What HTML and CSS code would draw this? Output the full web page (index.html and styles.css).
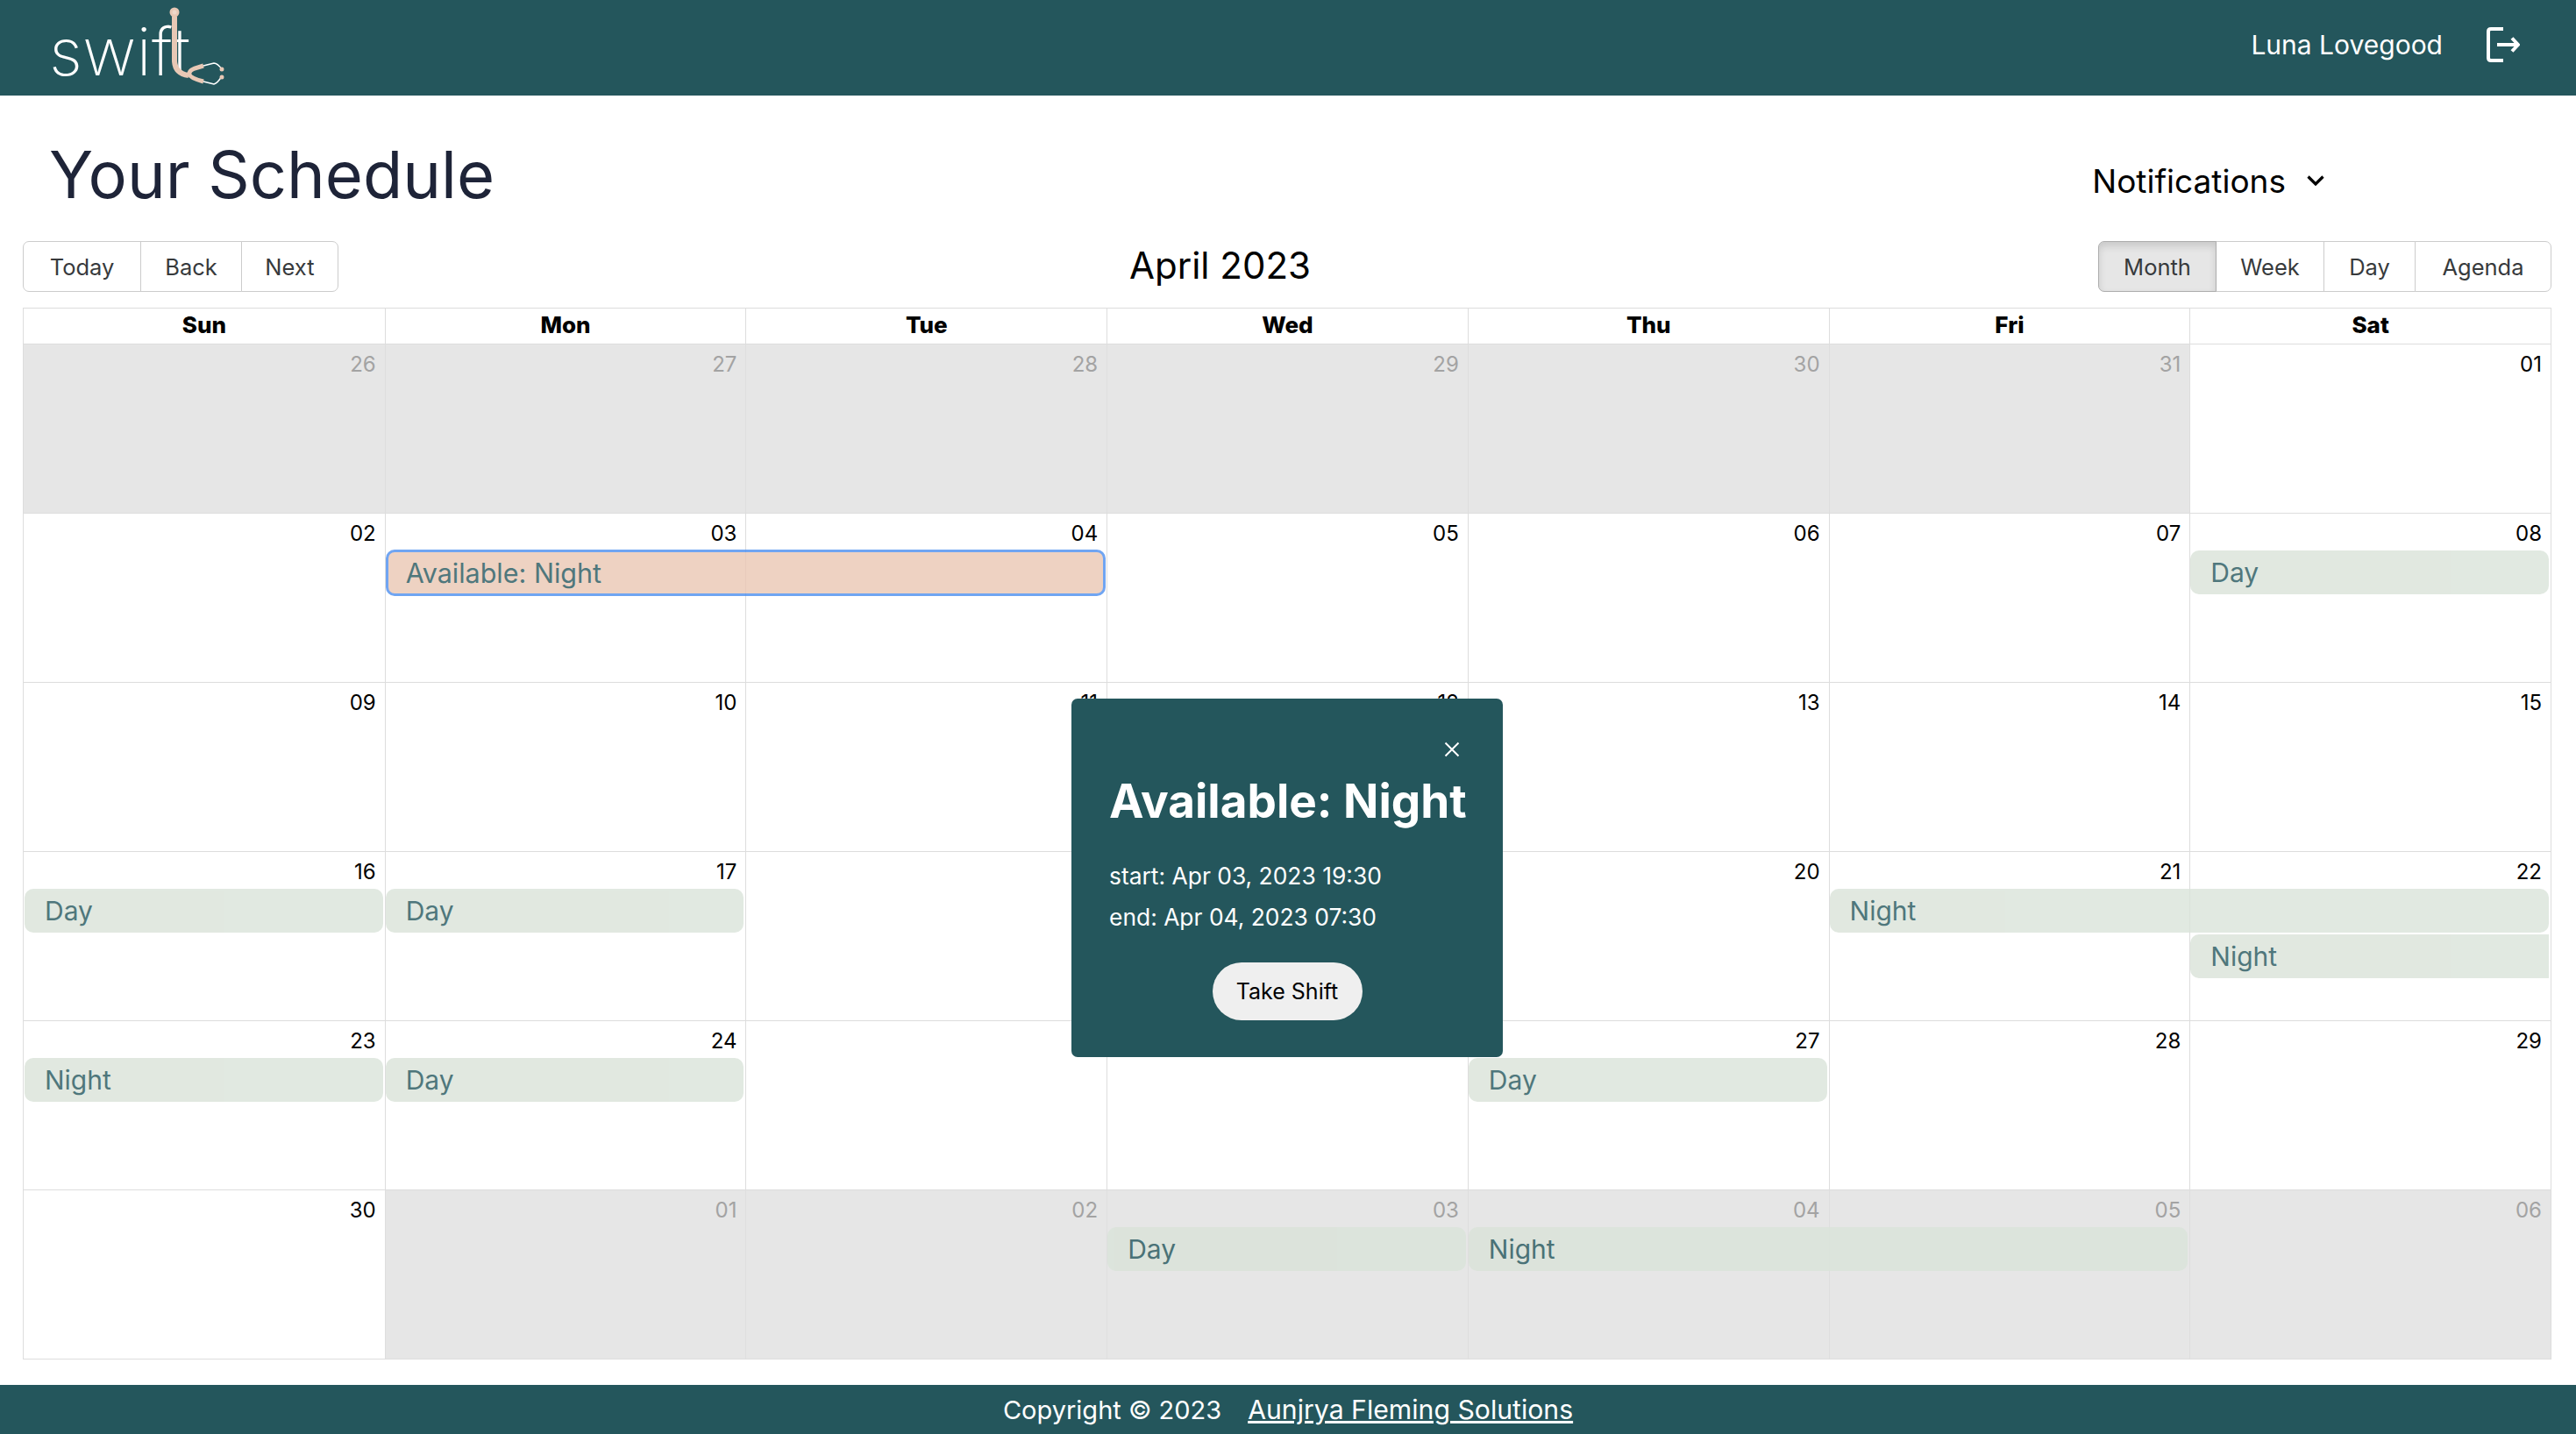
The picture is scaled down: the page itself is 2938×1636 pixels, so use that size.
FILE: index.html
```html
<!DOCTYPE HTML>
<html>
	<head>
		<title>Your Schedule</title>
		<link rel="stylesheet" href="styles.css">
	</head>
	<body>
		<div class="navbar">
			<div class="logo">
				<span class="logoText">swift</span>
				<svg class="logoScope" width="100" height="100" viewBox="0 0 100 100">
					<path d="M9 15V66Q10 80 25 82" fill="none" stroke="#e8c8b5" stroke-width="6"/>
					<circle cx="9" cy="10" r="5.5" fill="#e8c8b5"/>
					<circle cx="9" cy="10" r="2.5" fill="#efd8ca"/>
					<path d="M42 71L32 74Q25 77 26 81Q27 85 42 89" fill="none" stroke="#e8c8b5" stroke-width="5"/>
					<path d="M42 71L54 68Q58 68 63 75M42 89L54 92Q58 91 63 83" fill="none" stroke="#ffffff" stroke-width="1.5"/>
					<circle cx="63" cy="75" r="2.5" fill="#e8c8b5"/>
					<circle cx="63" cy="84" r="2.5" fill="#e8c8b5"/>
				</svg>
			</div>
			<div class="navRight">
				<span class="userName">Luna Lovegood</span>
				<svg class="logoutIcon" width="38" height="40" viewBox="0 0 38 40" fill="none" stroke="#ffffff" stroke-width="4" stroke-linejoin="round">
					<path d="M19 2H5Q2 2 2 5V35Q2 38 5 38H19"/>
					<path d="M12 20H36M29 12.5L36 20L29 27.5"/>
				</svg>
			</div>
		</div>

		<div class="content">
			<div class="titleRow">
				<h1 class="pageTitle">Your Schedule</h1>
				<div class="notifications">
					<span>Notifications</span>
					<svg width="20" height="12" viewBox="0 0 20 12" fill="none" stroke="#000000" stroke-width="3.2"><path d="M1.5 1.5L10 10L18.5 1.5"/></svg>
				</div>
			</div>

			<div class="toolbar">
				<div class="btnGroup">
					<button class="btn btnToday">Today</button>
					<button class="btn btnBack">Back</button>
					<button class="btn btnNext">Next</button>
				</div>
				<div class="monthLabel">April 2023</div>
				<div class="btnGroup">
					<button class="btn btnMonth active">Month</button>
					<button class="btn btnWeek">Week</button>
					<button class="btn btnDay">Day</button>
					<button class="btn btnAgenda">Agenda</button>
				</div>
			</div>

			<div class="calendar">
				<div class="weekHeader">
					<div>Sun</div><div>Mon</div><div>Tue</div><div>Wed</div><div>Thu</div><div>Fri</div><div>Sat</div>
				</div>

				<div class="week">
					<div class="day off">26</div><div class="day off">27</div><div class="day off">28</div><div class="day off">29</div><div class="day off">30</div><div class="day off">31</div><div class="day">01</div>
				</div>

				<div class="week">
					<div class="day">02</div><div class="day">03</div><div class="day">04</div><div class="day">05</div><div class="day">06</div><div class="day">07</div><div class="day">08</div>
					<div class="event selected c2 s2 l1">Available: Night</div>
					<div class="event c7 s1 l1">Day</div>
				</div>

				<div class="week">
					<div class="day">09</div><div class="day">10</div><div class="day">11</div><div class="day">12</div><div class="day">13</div><div class="day">14</div><div class="day">15</div>
				</div>

				<div class="week">
					<div class="day">16</div><div class="day">17</div><div class="day">18</div><div class="day">19</div><div class="day">20</div><div class="day">21</div><div class="day">22</div>
					<div class="event c1 s1 l1">Day</div>
					<div class="event c2 s1 l1">Day</div>
					<div class="event c6 s2 l1">Night</div>
					<div class="event c7 s1 l2 open">Night</div>
				</div>

				<div class="week">
					<div class="day">23</div><div class="day">24</div><div class="day">25</div><div class="day">26</div><div class="day">27</div><div class="day">28</div><div class="day">29</div>
					<div class="event c1 s1 l1">Night</div>
					<div class="event c2 s1 l1">Day</div>
					<div class="event c5 s1 l1">Day</div>
				</div>

				<div class="week">
					<div class="day">30</div><div class="day off">01</div><div class="day off">02</div><div class="day off">03</div><div class="day off">04</div><div class="day off">05</div><div class="day off">06</div>
					<div class="event c4 s1 l1">Day</div>
					<div class="event c5 s2 l1">Night</div>
				</div>
			</div>
		</div>

		<div class="footer">
			<span>Copyright © 2023</span>
			<a href="#">Aunjrya Fleming Solutions</a>
		</div>

		<div class="popup">
			<svg class="popupClose" width="18" height="18" viewBox="0 0 18 18" stroke="#ffffff" stroke-width="2"><path d="M1.5 1.5L16.5 16.5M16.5 1.5L1.5 16.5"/></svg>
			<h2 class="popupTitle">Available: Night</h2>
			<p class="popupLine">start: Apr 03, 2023 19:30</p>
			<p class="popupLine">end: Apr 04, 2023 07:30</p>
			<div class="popupAction"><button class="takeShift">Take Shift</button></div>
		</div>
	</body>
</html>
```

FILE: styles.css
```css
*
{
	box-sizing: border-box;
}
body
{
	margin: 0;
	min-height: 1636px;
	display: flex;
	flex-direction: column;
	position: relative;
	background-color: white;
	font-family: Inter, "Open Sans", sans-serif;
}
.navbar
{
	height: 109px;
	background-color: #24565c;
	color: white;
	display: flex;
	justify-content: space-between;
	align-items: center;
	padding-left: 56px;
	padding-right: 64px;
}
.logo
{
	position: relative;
	height: 109px;
	width: 200px;
}
.logoText
{
	display: block;
	font-weight: 200;
	font-size: 75px;
	line-height: 109px;
	letter-spacing: .5px;
	margin-top: 4px;
}
.logoScope
{
	position: absolute;
	left: 134px;
	top: 4px;
}
.navRight
{
	display: flex;
	align-items: center;
	gap: 50px;
	margin-top: -7px;
}
.userName
{
	font-size: 30px;
}
.content
{
	flex: 1;
	padding: 0 28px 28px 26px;
}
.titleRow
{
	height: 166px;
	display: flex;
	justify-content: space-between;
	align-items: center;
	padding-left: 30px;
	padding-right: 259px;
}
.pageTitle
{
	margin: 0;
	font-size: 74px;
	font-weight: 400;
	color: #1e2438;
	margin-top: 14px;
}
.notifications
{
	display: flex;
	align-items: center;
	gap: 24px;
	font-size: 37px;
	margin-top: 28px;
	color: black;
}
.toolbar
{
	height: 58px;
	display: flex;
	justify-content: space-between;
	align-items: center;
}
.monthLabel
{
	font-size: 42px;
	color: black;
	margin-left: 4px;
	margin-top: -3px;
}
.btnGroup
{
	display: flex;
	height: 58px;
}
.btn
{
	font-family: inherit;
	font-size: 25.5px;
	color: #373a3c;
	background-color: white;
	border: 1px solid #cccccc;
	margin-left: -1px;
	padding: 0;
}
.btn:first-child
{
	margin-left: 0;
	border-radius: 7px 0 0 7px;
}
.btn:last-child
{
	border-radius: 0 7px 7px 0;
}
.btn.active
{
	background-color: #e6e6e6;
	border-color: #adadad;
	box-shadow: inset 0 5px 9px rgba(0, 0, 0, .125);
	position: relative;
}
.btnToday { width: 135px; }
.btnBack { width: 116px; }
.btnNext { width: 111px; }
.btnMonth { width: 135px; }
.btnWeek { width: 124px; }
.btnDay { width: 105px; }
.btnAgenda { width: 156px; }
.calendar
{
	margin-top: 18px;
	border: 1px solid #dddddd;
}
.weekHeader
{
	display: grid;
	grid-template-columns: repeat(7, 1fr);
	height: 41px;
	border-bottom: 1px solid #dddddd;
}
.weekHeader div
{
	font-size: 26px;
	font-weight: 800;
	color: black;
	text-align: center;
	line-height: 38px;
	border-left: 1px solid #dddddd;
}
.weekHeader div:first-child
{
	border-left: none;
}
.week
{
	display: grid;
	grid-template-columns: repeat(7, 1fr);
	grid-template-rows: 42px 52px 52px 1fr;
	height: 193px;
	border-bottom: 1px solid #dddddd;
}
.week:last-child
{
	border-bottom: none;
	height: 192px;
}
.day
{
	grid-row: 1 / -1;
	font-size: 24px;
	color: black;
	text-align: right;
	padding-top: 9px;
	padding-right: 10px;
	line-height: 28px;
	border-left: 1px solid #dddddd;
}
.day:nth-child(1) { grid-column: 1; border-left: none; }
.day:nth-child(2) { grid-column: 2; }
.day:nth-child(3) { grid-column: 3; }
.day:nth-child(4) { grid-column: 4; }
.day:nth-child(5) { grid-column: 5; }
.day:nth-child(6) { grid-column: 6; }
.day:nth-child(7) { grid-column: 7; }
.day.off
{
	background-color: #e6e6e6;
	color: #a3a3a3;
	border-left-color: #dedede;
}
.event
{
	height: 50px;
	margin: 0 2px 0 1px;
	padding-left: 23px;
	border-radius: 10px;
	background-color: #dae3d9;
	opacity: .8;
	color: #24565c;
	font-size: 30px;
	line-height: 50px;
}
.event.selected
{
	height: 53px;
	margin: -1px 1px 0 1px;
	background-color: #ebc7b4;
	border: 3px solid #4d8ff0;
	line-height: 47px;
	padding-left: 20px;
	font-size: 30.5px;
}
.event.open
{
	border-radius: 10px 0 0 10px;
}
.c1 { grid-column-start: 1; }
.c2 { grid-column-start: 2; }
.c4 { grid-column-start: 4; }
.c5 { grid-column-start: 5; }
.c6 { grid-column-start: 6; }
.c7 { grid-column-start: 7; }
.s1 { grid-column-end: span 1; }
.s2 { grid-column-end: span 2; }
.l1 { grid-row: 2; }
.l2 { grid-row: 3; }
.footer
{
	height: 56px;
	background-color: #24565c;
	color: white;
	display: flex;
	justify-content: center;
	align-items: center;
	gap: 30px;
	font-size: 29px;
}
.footer a
{
	color: white;
	font-size: 30.2px;
}
.popup
{
	position: absolute;
	left: 1222px;
	top: 797px;
	width: 492px;
	height: 409px;
	background-color: #24565c;
	border-radius: 7px;
	color: white;
	padding: 0 43px;
}
.popupClose
{
	position: absolute;
	right: 49px;
	top: 49px;
}
.popupTitle
{
	margin: 0;
	padding-top: 85px;
	font-size: 53px;
	font-weight: 700;
	line-height: 64px;
	white-space: nowrap;
}
.popupLine
{
	margin: 0;
	font-size: 26.4px;
	line-height: 47px;
}
.popupTitle + .popupLine
{
	margin-top: 30px;
}
.popupAction
{
	text-align: center;
	margin-top: 28px;
}
.takeShift
{
	width: 171px;
	height: 66px;
	border: none;
	border-radius: 33px;
	background-color: #efefef;
	color: black;
	font-family: inherit;
	font-size: 25px;
}
```
